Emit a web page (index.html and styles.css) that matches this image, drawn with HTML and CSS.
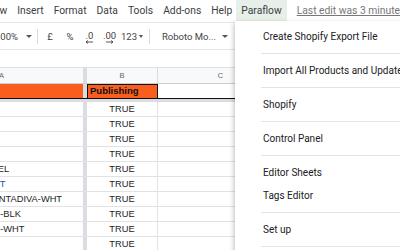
FILE: index.html
```html
<!doctype html>
<html>
<head>
    <title>Paraflow menu</title>

    <link rel="stylesheet" href="styles.css">
</head>
<body>
    <div class="menubar">
      <span class="menu-item">View</span>
      <span class="menu-item">Insert</span>
      <span class="menu-item">Format</span>
      <span class="menu-item">Data</span>
      <span class="menu-item">Tools</span>
      <span class="menu-item">Add-ons</span>
      <span class="menu-item">Help</span>
      <span class="menu-item active">Paraflow</span>
      <span class="last-edit">Last edit was 3 minutes ago</span>
    </div>

    <div class="toolbar">
      <div class="zoom"><span>100%</span><i class="caret"></i></div>
      <div class="sep"></div>
      <div class="tb-btn w20">£</div>
      <div class="tb-btn w20">%</div>
      <div class="tb-btn dec w19">
        <span>.0</span>
        <svg width="9" height="4" viewBox="0 0 9 4"><path d="M1 2H8M1 2L3 0.5M1 2L3 3.5" stroke="#444" stroke-width="0.9" fill="none"/></svg>
      </div>
      <div class="tb-btn dec w21">
        <span>.00</span>
        <svg width="9" height="4" viewBox="0 0 9 4"><path d="M1 2H8M8 2L6 0.5M8 2L6 3.5" stroke="#444" stroke-width="0.9" fill="none"/></svg>
      </div>
      <div class="tb-btn w24">123<i class="caret small"></i></div>
      <div class="sep wide"></div>
      <div class="font-select"><span>Roboto Mo...</span><i class="caret"></i></div>
    </div>

    <div class="formula-bar"></div>

    <div class="sheet">
      <div class="row head">
        <div class="cell col-a">A</div><div class="freeze"></div><div class="cell col-b">B</div><div class="cell col-c">C</div>
      </div>
      <div class="row first">
        <div class="cell col-a"></div><div class="freeze"></div><div class="cell col-b selected">Publishing</div><div class="cell col-c"></div>
      </div>
      <div class="freeze-row"></div>
      <div class="row"><div class="cell col-a"></div><div class="freeze"></div><div class="cell col-b">TRUE</div><div class="cell col-c"></div></div>
      <div class="row"><div class="cell col-a"></div><div class="freeze"></div><div class="cell col-b">TRUE</div><div class="cell col-c"></div></div>
      <div class="row"><div class="cell col-a"></div><div class="freeze"></div><div class="cell col-b">TRUE</div><div class="cell col-c"></div></div>
      <div class="row"><div class="cell col-a"></div><div class="freeze"></div><div class="cell col-b">TRUE</div><div class="cell col-c"></div></div>
      <div class="row"><div class="cell col-a">FIG-MIRROR-PANEL</div><div class="freeze"></div><div class="cell col-b">TRUE</div><div class="cell col-c"></div></div>
      <div class="row"><div class="cell col-a link">RATTAN-LAMP-SET</div><div class="freeze"></div><div class="cell col-b">TRUE</div><div class="cell col-c"></div></div>
      <div class="row"><div class="cell col-a">GREYSTONE-PLANTADIVA-WHT</div><div class="freeze"></div><div class="cell col-b">TRUE</div><div class="cell col-c"></div></div>
      <div class="row"><div class="cell col-a">PLANTADIVA-DUO-BLK</div><div class="freeze"></div><div class="cell col-b">TRUE</div><div class="cell col-c"></div></div>
      <div class="row"><div class="cell col-a">PLANTADIVA-DUO-WHT</div><div class="freeze"></div><div class="cell col-b">TRUE</div><div class="cell col-c"></div></div>
      <div class="row"><div class="cell col-a"></div><div class="freeze"></div><div class="cell col-b">TRUE</div><div class="cell col-c"></div></div>
    </div>

    <div class="dropdown">
      <div class="menu-group first">
        <div class="menu-entry">Create Shopify Export File</div>
      </div>
      <div class="menu-group">
        <div class="menu-entry">Import All Products and Update Sheets</div>
      </div>
      <div class="menu-group">
        <div class="menu-entry">Shopify</div>
      </div>
      <div class="menu-group">
        <div class="menu-entry">Control Panel</div>
      </div>
      <div class="menu-group">
        <div class="menu-entry">Editor Sheets</div>
        <div class="menu-entry">Tags Editor</div>
      </div>
      <div class="menu-group">
        <div class="menu-entry">Set up</div>
      </div>
    </div>
</body>
</html>
```

FILE: styles.css
```css
* {
  margin: 0;
  padding: 0;
  box-sizing: border-box;
}
html, body {
  width: 400px;
  height: 250px;
  overflow: hidden;
}
body {
  position: relative;
  background-color: #fff;
  font-family: Roboto, "Liberation Sans", Arial, sans-serif;
  color: #3c4043;
}

/* menu bar */
.menubar {
  display: flex;
  height: 22px;
  margin-left: -19px;
  font-size: 10.3px;
  white-space: nowrap;
}
.menu-item {
  padding: 0 4px;
  margin-right: 2px;
  height: 21px;
  line-height: 21px;
}
.menu-item.active {
  background-color: #e6efe8;
  margin-left: -2px;
  padding: 0 5px;
}
.last-edit {
  margin-left: 8px;
  line-height: 21px;
  color: #777;
  text-decoration: underline;
}

/* toolbar */
.toolbar {
  display: flex;
  align-items: center;
  height: 28px;
  margin-left: -8px;
  border-top: 1px solid #e6e6e6;
  border-bottom: 1px solid #e3e3e3;
  font-size: 9.5px;
  color: #444;
  white-space: nowrap;
}
.caret {
  display: inline-block;
  width: 0;
  height: 0;
  border-left: 3px solid transparent;
  border-right: 3px solid transparent;
  border-top: 3px solid #555;
}
.caret.small {
  margin-left: 2px;
  border-left-width: 2.5px;
  border-right-width: 2.5px;
}
.zoom {
  display: flex;
  align-items: center;
  justify-content: space-between;
  width: 44px;
  padding: 0 4px 0 3px;
}
.sep {
  width: 1px;
  height: 15px;
  margin: 0 2px 0 1px;
  background-color: #dadada;
}
.sep.wide {
  margin: 0 8px 0 5px;
}
.tb-btn {
  display: flex;
  align-items: center;
  justify-content: center;
}
.tb-btn.dec {
  flex-direction: column;
  line-height: 9px;
  padding-top: 2px;
}
.tb-btn.dec svg {
  display: block;
}
.w19 { width: 19px; }
.w20 { width: 20px; }
.w21 { width: 21px; }
.w24 { width: 24px; }
.font-select {
  display: flex;
  align-items: center;
  justify-content: space-between;
  width: 74px;
  padding: 0 4px;
}

.formula-bar {
  height: 17px;
}

/* grid */
.sheet {
  margin-left: -83px;
  font-family: "Liberation Sans", Arial, sans-serif;
  font-size: 9.3px;
  color: #222;
}
.row {
  display: flex;
  height: 15px;
  border-bottom: 1px solid #e2e2e2;
}
.cell {
  height: 100%;
  line-height: 14px;
  border-right: 1px solid #e2e2e2;
  white-space: nowrap;
  overflow: hidden;
}
.col-a {
  width: 166px;
  padding-left: 3px;
  border-right: none;
}
.col-b {
  width: 71px;
  text-align: center;
}
.col-c {
  width: 126px;
}
.freeze {
  width: 4px;
  background-color: #d9dce1;
}
.link {
  color: #1155cc;
}
.row.head {
  height: 17px;
  background-color: #f8f9fa;
  border-top: 1px solid #e0e0e0;
  border-bottom: 1px solid #cfcfcf;
}
.row.head .cell {
  line-height: 15px;
  text-align: center;
  font-size: 7.5px;
  color: #666;
  border-right-color: #dcdcdc;
}
.row.first {
  background-color: #f95e1e;
  border-bottom: 1px solid #111;
}
.row.first .col-b {
  text-align: left;
  padding-left: 2px;
  font-weight: bold;
  font-size: 9.5px;
  color: #111;
  border-left: 1px solid #111;
  border-right: 1px solid #111;
  border-top: 1px solid #111;
  line-height: 12px;
}
.row.first .col-c {
  background-color: #fff;
}
.freeze-row {
  height: 3px;
  background-color: #d9dce1;
}

/* dropdown */
.dropdown {
  position: absolute;
  left: 235px;
  top: 21px;
  width: 200px;
  height: 240px;
  background-color: #fff;
  box-shadow: -1px 2px 5px rgba(0, 0, 0, 0.25);
  font-family: Roboto, "Liberation Sans", Arial, sans-serif;
  font-size: 10px;
  color: #202124;
}
.menu-group {
  margin-left: 26px;
  padding: 5px 0;
  border-bottom: 1px solid #e3e3e3;
}
.menu-group.first {
  padding-top: 4px;
}
.menu-entry {
  height: 23px;
  line-height: 23px;
  padding-left: 2px;
  white-space: nowrap;
}
```
